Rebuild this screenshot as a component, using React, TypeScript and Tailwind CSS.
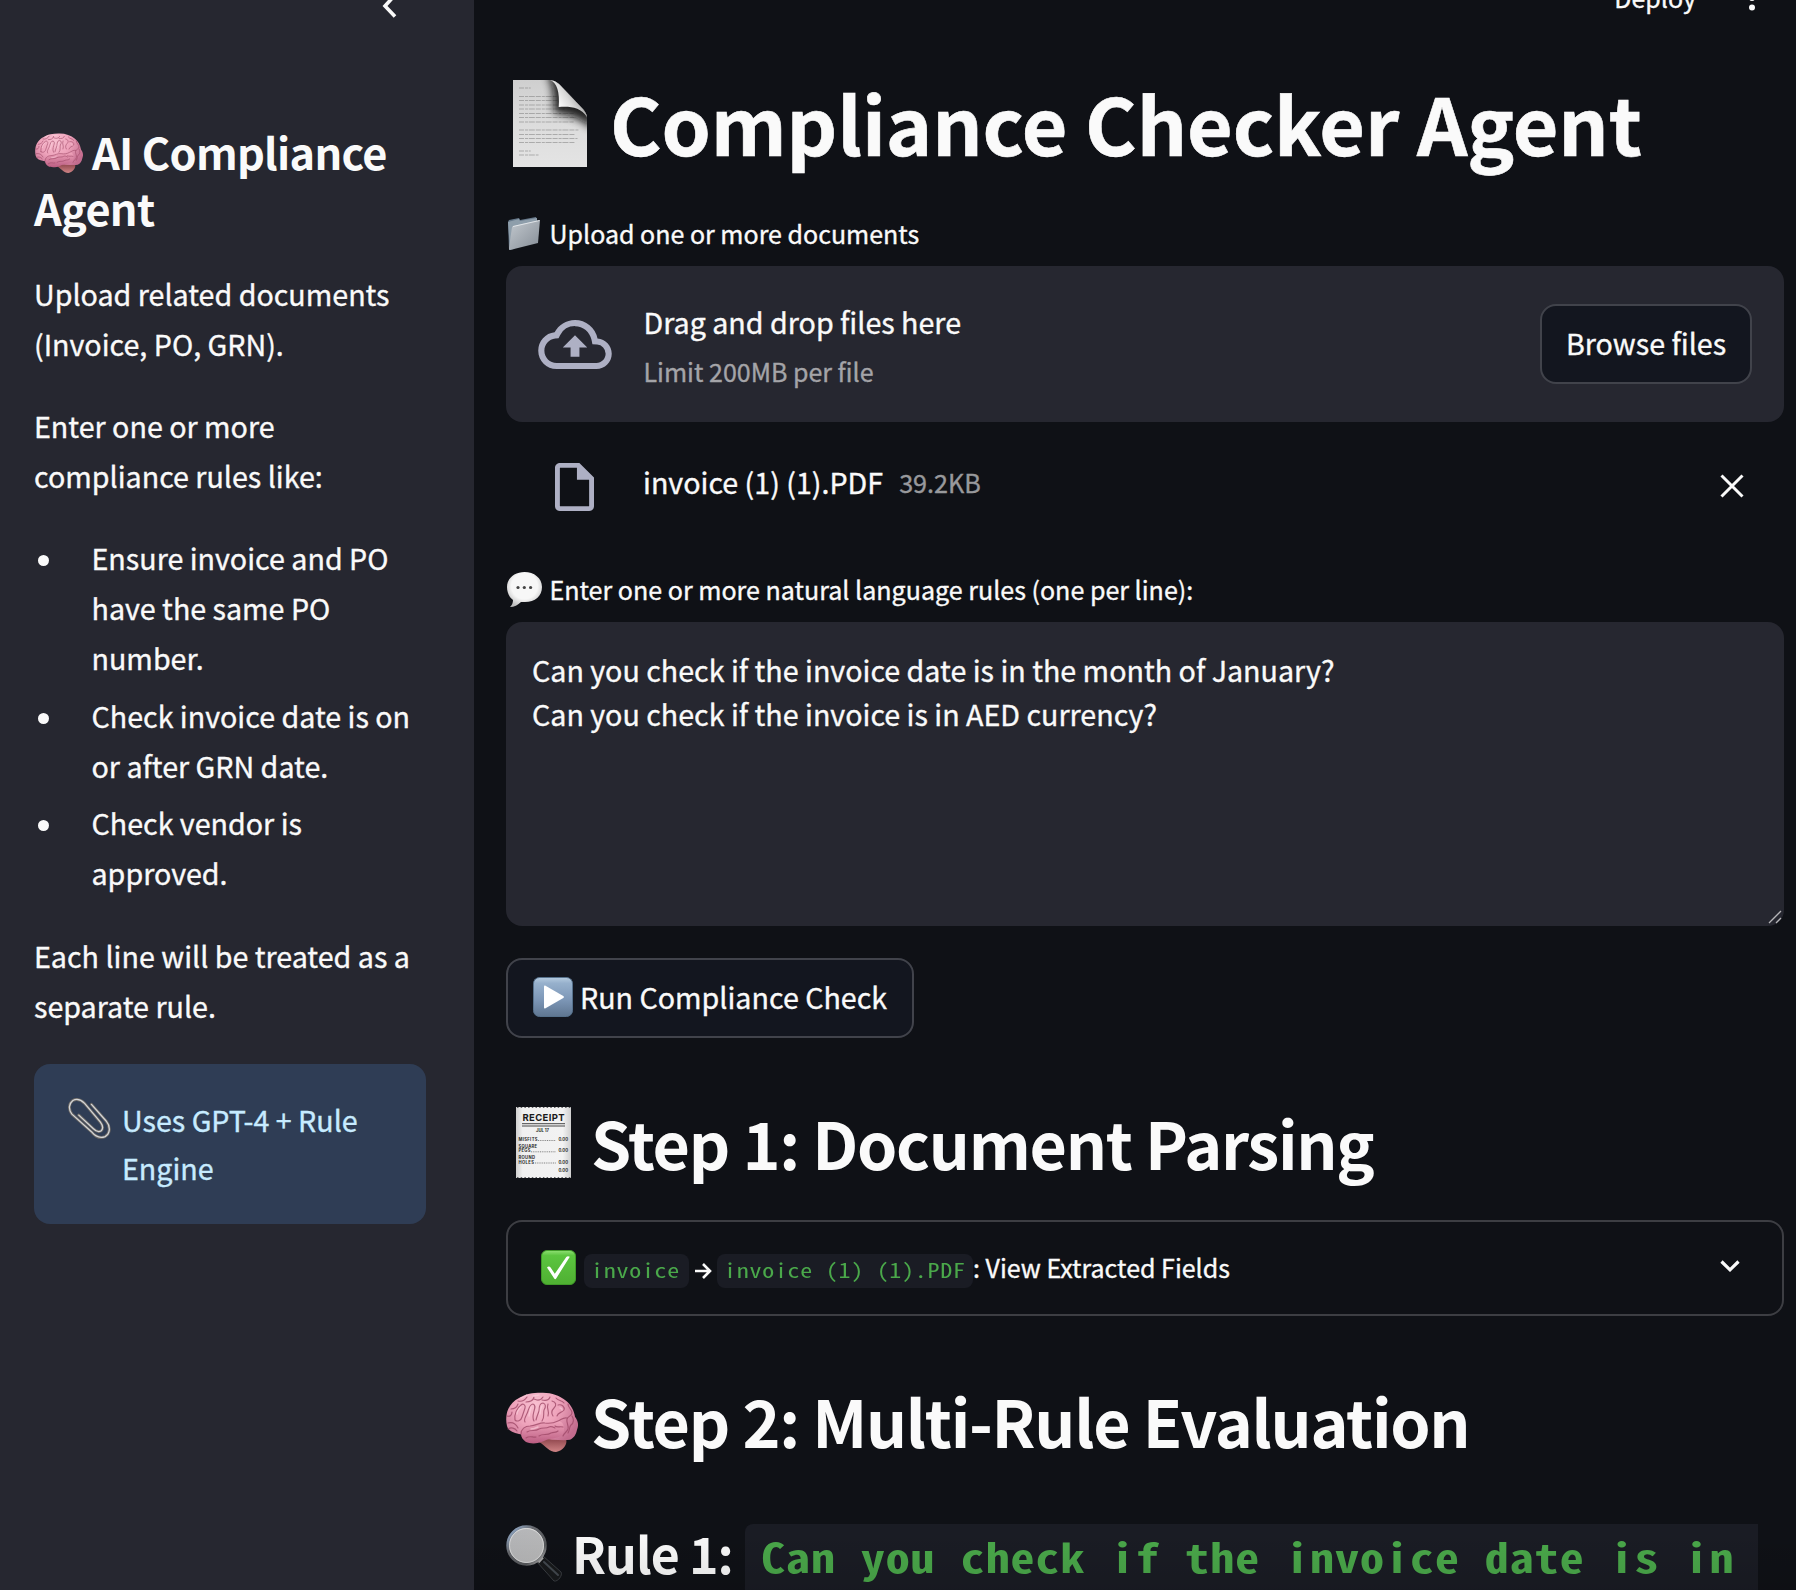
import React from "react";

type IconProps = { className?: string };

function Brain({ className }: IconProps) {
  return (
    <svg viewBox="0 0 72 60" className={className} fill="none">
      <defs>
        <radialGradient id="brainTop" cx="30" cy="12" r="46" gradientUnits="userSpaceOnUse">
          <stop offset="0" stopColor="#f8bfd0" />
          <stop offset="0.5" stopColor="#eea3bb" />
          <stop offset="1" stopColor="#c36c8e" />
        </radialGradient>
        <linearGradient id="brainLobe" x1="0" y1="0" x2="0" y2="1">
          <stop offset="0" stopColor="#f0a5bc" />
          <stop offset="1" stopColor="#bb5d82" />
        </linearGradient>
        <linearGradient id="brainStem" x1="0" y1="0" x2="0" y2="1">
          <stop offset="0" stopColor="#8a4148" />
          <stop offset="1" stopColor="#d08486" />
        </linearGradient>
      </defs>
      <path d="M33 50c8-4 20-6 27-3 2 5-3 12-10 13-7 0-10-6-17-10z" fill="url(#brainStem)" />
      <path
        d="M13 42C6 41 2 38 1 34 0 30 0 26 .7 22 2 15 7 9 13 6 20 1.500 28 .5 37 .7c9 0 17 3 23 8 5 4 8 10 9 16 3 4 4 8 2 13-1 5-3 8-7 10-6 1-12 0-18 0z"
        fill="url(#brainTop)"
      />
      <path
        d="M15 42c0-5 4-8 9-8 7-.5 10-3 15-3 6-1 9 0 13-2 6 0 8 9 4 14-5 4-12 3-18 6-6 3-14 3-18 1-3-2-5-5-5-8z"
        fill="url(#brainLobe)"
      />
      <g stroke="#a04a69" strokeWidth="1.150" strokeLinecap="round" strokeLinejoin="round" opacity=".8">
        <path d="M15 42c0-5 4-8 9-8 7-.5 10-4 15-3 6 1 9 0 13-2 3-1 5-4 9-3" />
        <path d="M2 31c4-1 8 1 10 5M2 37c3-2 7-1 9 2M1 24c3 1 5-1 5-4" />
        <path d="M9 28c-1-6 2-12 6-15 2-2 5 0 4 3l-3 9c-1 4-5 5-7 3z" />
        <path d="M19 30c-2-3 2-7 3-11 1-3 2-7 5-7 3 1 2 4 1 7-1 4-2 7 0 10" />
        <path d="M30 28c1-4 2-6 3-9 0-4 1-8 4-8 3 1 3 4 1 7-1 4 1 7-2 11" />
        <path d="M5 17c3 0 6-2 7-5M12 9c4 1 7-1 9-4M20 10c4 0 7-1 8-5M28 7c4 2 7 1 9-2M36 8c4 1 7 0 8-3" />
        <path d="M42 12c-2 5 2 7 0 12M46 9c4 1 5 4 2 7-2 2-3 5-1 8M50 6c2 3 6 2 8 5M52 13c4-1 7 2 6 5-2 3-6 2-7 6" />
        <path d="M62 12c0 4 4 5 4 9 0 3-4 3-5 6-1 4 2 6 1 10-1 3-4 4-5 7" />
        <path d="M66 24c2 3 2 7-1 9-2 2-1 5-3 8M57 35c-3-1-6 1-8-1" />
        <path d="M21 40c4-3 8 0 12-3 4-2 7 0 10-2 2-1 4 0 6 1M20 46c4-3 7 0 10-1M33 44c4-3 8 0 12-3 3-1 5 0 7-2" />
      </g>
      <g stroke="#fbd3df" strokeWidth="1.400" strokeLinecap="round" opacity=".6">
        <path d="M11 22c0-3 2-5 4-7M23 24c0-3 2-6 2-9M34 22c0-3 1-6 2-8M15 6c3-1 4-2 6-3M27 4c2 0 4-1 6-1M54 16c1 0 2 1 2 2M25 37c3 0 5-1 7-2" />
      </g>
    </svg>
  );
}

function PageCurl({ className }: IconProps) {
  const rows = [
    [8, 9], [16.500, 29], [20.500, 30], [25, 33], [29, 35], [33.500, 42], [37.500, 44], [42, 42],
    [50, 46], [54.500, 43], [58.500, 45], [62.500, 43], [71, 9], [75, 15],
  ];
  return (
    <svg viewBox="0 0 74 87" className={className} fill="none">
      <defs>
        <linearGradient id="sheet" x1="0" y1="0" x2="0" y2="1">
          <stop offset="0" stopColor="#cfcfcf" />
          <stop offset="0.5" stopColor="#dcdcdc" />
          <stop offset="1" stopColor="#e4e4e4" />
        </linearGradient>
        <linearGradient id="curl" x1="46" y1="26" x2="62" y2="16" gradientUnits="userSpaceOnUse">
          <stop offset="0" stopColor="#fafafa" />
          <stop offset="0.6" stopColor="#dadada" />
          <stop offset="1" stopColor="#b5b5b5" />
        </linearGradient>
        <filter id="soft" x="-50%" y="-50%" width="200%" height="200%">
          <feGaussianBlur stdDeviation="4" />
        </filter>
        <clipPath id="sheetClip">
          <path d="M0 0h37c5 .5 8 3 11 6l20 21c4 4 6 7 6 12v48H0z" />
        </clipPath>
      </defs>
      <g clipPath="url(#sheetClip)">
        <rect width="74" height="87" fill="url(#sheet)" />
        {rows.map(([y, w]) => (
          <path key={y} d={`M6 ${y}h${w * 1.3}`} stroke="#777" strokeWidth="1.100" strokeDasharray="5 1 3 .8 6 1" opacity=".5" />
        ))}
        <path d="M34-6c5 8 7 20 7 39 12 1 26 4 38 16L84 20 54-10z" fill="#080808" opacity=".9" filter="url(#soft)" />
      </g>
      <path d="M37 .3C44 2 47 13 45.700 27 56 26 68 27 74 37c-.5-4-3-7-6-10L48 6C45 3 42 .5 37 .3z" fill="url(#curl)" />
    </svg>
  );
}

function Folder({ className }: IconProps) {
  return (
    <svg viewBox="0 0 34 34" className={className} fill="none">
      <defs>
        <linearGradient id="folderFront" x1="0" y1="0" x2="1" y2="1">
          <stop offset="0" stopColor="#c3c9cf" />
          <stop offset="1" stopColor="#858d96" />
        </linearGradient>
      </defs>
      <path d="M1 5l1-2 10-2 1 2 16-3 1 3-23 29-5 1z" fill="#66788a" />
      <path d="M1 5l11-3 1 2 17-3v4L6 9 3 33z" fill="#8e9eab" />
      <path d="M6 9l27-6-2 23L3 33c-1 0-1-1-1-2L5 10z" fill="url(#folderFront)" />
      <path d="M6 9.500L32.500 3.500" stroke="#e0e4e8" strokeWidth="1" />
    </svg>
  );
}

function Bubble({ className }: IconProps) {
  return (
    <svg viewBox="0 0 35 35" className={className}>
      <defs>
        <radialGradient id="bubble" cx=".5" cy=".4" r=".62">
          <stop offset=".6" stopColor="#f7f7f7" />
          <stop offset="1" stopColor="#bdbdbd" />
        </radialGradient>
      </defs>
      <path d="M17.500 0C27 0 35 6 35 15s-7 15-17 15h-4c-3 3-7 5-11 5 2-2 3-4 3-7-4-3-6-8-6-13C0 6 8 0 17.500 0z" fill="url(#bubble)" />
      <g fill="#444">
        <circle cx="11" cy="15.500" r="1.600" />
        <circle cx="17.300" cy="15.500" r="1.600" />
        <circle cx="23.600" cy="15.500" r="1.600" />
      </g>
    </svg>
  );
}

function Play({ className }: IconProps) {
  return (
    <svg viewBox="0 0 40 40" className={className}>
      <defs>
        <linearGradient id="play" x1="0" y1="0" x2="0" y2="1">
          <stop offset="0" stopColor="#b5cbe0" />
          <stop offset=".15" stopColor="#96b0cc" />
          <stop offset=".55" stopColor="#7e98b8" />
          <stop offset="1" stopColor="#5f7691" />
        </linearGradient>
      </defs>
      <rect x=".5" y=".5" width="39" height="39" rx="6" fill="url(#play)" stroke="#56718c" />
      <path d="M11 9.500v21c0 .9.700 1.100 1.500.7l17.800-10.300c.8-.5.8-1.300 0-1.800L12.500 8.800c-.8-.4-1.500-.2-1.500.7z" fill="#fff" />
    </svg>
  );
}

function Receipt({ className }: IconProps) {
  const font = "Inter, 'Liberation Sans', sans-serif";
  return (
    <svg viewBox="0 0 55 71" className={className}>
      <defs>
        <linearGradient id="receipt" x1="0" y1="0" x2="1" y2="0">
          <stop offset="0" stopColor="#d0d0d0" />
          <stop offset=".12" stopColor="#f0f0f0" />
          <stop offset=".85" stopColor="#f2f2f2" />
          <stop offset="1" stopColor="#cfcfcf" />
        </linearGradient>
      </defs>
      <rect width="55" height="71" fill="url(#receipt)" />
      <path d="M1 .3h54M1 70.700h54" stroke="#101116" strokeWidth=".8" strokeDasharray="1.500 2.200" />
      <text x="27.500" y="14" textAnchor="middle" textLength="42" fontFamily={font} fontWeight="700" fontSize="9.500" fill="#1a1a1a">RECEIPT</text>
      <path d="M6 16.700h43M6 19h43" stroke="#333" strokeWidth=".9" />
      <g fontFamily={font} fontWeight="700" fontSize="4.200" fill="#2a2a2a">
        <text x="26.500" y="24.700" textAnchor="middle">JUL 17</text>
        <text x="2.500" y="34" textLength="19">MISFITS</text>
        <text x="2.500" y="41" textLength="18.500">SQUARE</text>
        <text x="2.500" y="45.300" textLength="12">PEGS</text>
        <text x="2.500" y="52.300" textLength="16.500">ROUND</text>
        <text x="2.500" y="56.500" textLength="15.500">HOLES</text>
        <text x="52" y="34" textAnchor="end">0.00</text>
        <text x="52" y="45.300" textAnchor="end">0.00</text>
        <text x="52" y="56.500" textAnchor="end">0.00</text>
        <text x="52" y="64.500" textAnchor="end">0.00</text>
      </g>
      <path d="M22 33.500h18M15 44.800h25M19 56h21" stroke="#555" strokeWidth=".7" strokeDasharray="1 .8" />
    </svg>
  );
}

function CheckBox({ className }: IconProps) {
  return (
    <svg viewBox="0 0 35 35" className={className} fill="none">
      <defs>
        <linearGradient id="check" x1="0" y1="0" x2="0" y2="1">
          <stop offset="0" stopColor="#8fdf74" />
          <stop offset=".15" stopColor="#5cc540" />
          <stop offset="1" stopColor="#4fb032" />
        </linearGradient>
      </defs>
      <rect x=".5" y=".5" width="34" height="34" rx="5.500" fill="url(#check)" stroke="#3f9a28" />
      <path d="M6 17.500c1-1.200 2.800-1.200 3.600 0l4.200 6.300L25.300 7c.7-1 2.500-1 3.500-.2L15.200 28.400c-.6 1-1.400 1-2 0z" fill="#fff" />
    </svg>
  );
}

function Magnifier({ className }: IconProps) {
  return (
    <svg viewBox="0 0 57 57" className={className} fill="none">
      <defs>
        <linearGradient id="lens" x1="0" y1="0" x2="1" y2="1">
          <stop offset="0" stopColor="#b4b5b8" />
          <stop offset="1" stopColor="#b9b9b9" />
        </linearGradient>
        <linearGradient id="ring" x1="0" y1="0" x2="1" y2="1">
          <stop offset="0" stopColor="#9dbbe0" />
          <stop offset=".35" stopColor="#66686d" />
          <stop offset=".75" stopColor="#55575a" />
          <stop offset="1" stopColor="#d9d9d9" />
        </linearGradient>
      </defs>
      <path d="M31 37l6-6 18 16c2 3-3 10-7 9z" fill="#17191b" stroke="#44484d" strokeWidth=".8" />
      <path d="M38 37l14 13" stroke="#43494f" strokeWidth="2" strokeLinecap="round" />
      <path d="M32.500 37.500l4.500-5" stroke="#a8a8a8" strokeWidth="2" />
      <circle cx="20.500" cy="20.500" r="18.800" fill="url(#lens)" stroke="url(#ring)" strokeWidth="2.800" />
      <circle cx="20.500" cy="20.500" r="17" stroke="#e2e2e2" strokeWidth=".8" />
    </svg>
  );
}

function Paperclip({ className }: IconProps) {
  const d =
    "M24 6L39 23c5 6 4 13-1 16-5 2-10 0-14-5L4 16C0 11 1 5 5 2c4-2 8-1 12 3l16 19c3 4 3 7 1 9-3 2-6 0-8-2L11 17";
  return (
    <svg viewBox="0 0 44 43" className={className} fill="none" strokeLinecap="round" strokeLinejoin="round">
      <path d={d} stroke="#6c6864" strokeWidth="3" />
      <path d={d} stroke="#d3d5d8" strokeWidth="1.300" />
    </svg>
  );
}

// Monospaced chip; the glyphs are widened to give the 0.6em advance of Source Code Pro.
function Code({ children, box, text }: { children: React.ReactNode; box: string; text: string }) {
  return (
    <code
      className={
        "block shrink-0 overflow-hidden bg-[#1a1c24] font-['Noto_Sans_Mono_CJK_SC','Liberation_Mono',monospace] text-[#4aa84a] " +
        box
      }
    >
      <span className={"block w-max origin-left scale-x-[1.2] whitespace-pre " + text}>{children}</span>
    </code>
  );
}

const examples = [
  ["Ensure invoice and PO", "have the same PO", "number."],
  ["Check invoice date is on", "or after GRN date."],
  ["Check vendor is", "approved."],
];

function Lines({ lines }: { lines: string[] }) {
  return (
    <>
      {lines.map((line) => (
        <span key={line} className="block whitespace-nowrap">
          {line}
        </span>
      ))}
    </>
  );
}

function Sidebar() {
  return (
    <aside className="flex w-[474px] shrink-0 flex-col bg-[#262730] pr-12 pl-[34px] text-[28.650px] leading-[50.100px]">
      <div className="flex h-[123px] justify-end pr-[28px]">
        <svg viewBox="0 0 17 24" className="mt-[-6px] h-6 w-[17px]" fill="none" stroke="#fafafa" strokeWidth="3.6">
          <path d="M14 1L4 12l10 10.500" />
        </svg>
      </div>
      <h2 className="text-[43.300px] leading-[56px] font-semibold tracking-[-0.7px] [-webkit-text-stroke:0px]">
        <span className="flex whitespace-nowrap">
          <Brain className="mt-[10px] mr-[9px] ml-px h-[40px] w-[48px] shrink-0" />
          AI Compliance
        </span>
        Agent
      </h2>
      <p className="mt-[34px]">
        <Lines lines={["Upload related documents", "(Invoice, PO, GRN)."]} />
      </p>
      <p className="mt-[32px]">
        <Lines lines={["Enter one or more", "compliance rules like:"]} />
      </p>
      <ul className="mt-[31.900px] flex flex-col gap-[7px]">
        {examples.map((lines) => (
          <li key={lines[0]} className="flex">
            <span className="mt-[22px] mr-[42.500px] ml-[4px] size-[11px] shrink-0 rounded-full bg-[#fafafa]" />
            <span>
              <Lines lines={lines} />
            </span>
          </li>
        ))}
      </ul>
      <p className="mt-[33px]">
        <Lines lines={["Each line will be treated as a", "separate rule."]} />
      </p>
      <div className="mt-[33px] flex h-[160px] w-[392px] rounded-2xl bg-[#2f3d55] pt-[31.500px] pl-[34px] leading-[48.500px] text-[#c7ebff]">
        <Paperclip className="mt-[2px] mr-[11px] h-[43px] w-[43px] shrink-0" />
        <p>
          <Lines lines={["Uses GPT-4 + Rule", "Engine"]} />
        </p>
      </div>
    </aside>
  );
}

export default function App() {
  return (
    <div className="flex h-[1590px] w-[1796px] overflow-hidden bg-[#0f1116] font-['Noto_Sans_CJK_SC',sans-serif] text-[#fafafa] [-webkit-text-stroke:0.35px]">
      <Sidebar />
      <main className="relative flex flex-1 flex-col overflow-hidden pr-[12px] pl-[32px]">
        <header className="flex h-[17px] shrink-0 items-end justify-end pr-[28px]">
          <span className="text-[25px] leading-[40px]">Deploy</span>
          <svg viewBox="0 0 8 32" className="mb-[6px] ml-[52px] h-8 w-2" fill="#fafafa">
            <circle cx="4" cy="10" r="3" />
            <circle cx="4" cy="19" r="3" />
            <circle cx="4" cy="28.500" r="3" />
          </svg>
        </header>

        <h1 className="mt-[52px] flex h-[106px] shrink-0 pl-[7px] text-[78.8px] leading-[106px] font-bold tracking-[-0.12px] whitespace-nowrap [-webkit-text-stroke:0.6px]">
          <PageCurl className="mt-[11px] mr-[23px] h-[87px] w-[74px]" />
          Compliance Checker Agent
        </h1>

        <div className="mt-[36px] flex h-[45px] shrink-0 text-[25px] leading-[45px]">
          <Folder className="mt-[6px] mr-[8.500px] ml-px h-[34px] w-[34px]" />
          Upload one or more documents
        </div>
        <section className="mt-[10px] flex h-[156px] shrink-0 rounded-2xl bg-[#262730] pr-8 pl-8">
          <svg viewBox="0 0 24 16" className="mt-[54px] mr-[31.500px] h-[49px] w-[74px]" fill="#aeb0c4">
            <path d="M19.350 6.040A7.490 7.490 0 0 0 12 0C9.110 0 6.600 1.640 5.350 4.040A5.994 5.994 0 0 0 0 10c0 3.310 2.690 6 6 6h13c2.760 0 5-2.240 5-5 0-2.640-2.050-4.780-4.650-4.960zM19 14H6c-2.210 0-4-1.790-4-4 0-2.050 1.530-3.760 3.560-3.970l1.070-.11.5-.95A5.469 5.469 0 0 1 12 2c2.620 0 4.880 1.860 5.390 4.430l.3 1.500 1.530.11A2.980 2.980 0 0 1 22 11c0 1.650-1.350 3-3 3zM8 9h2.550v3h2.900V9H16l-4-4z" />
          </svg>
          <div className="pt-[30px] whitespace-nowrap">
            <p className="text-[28.650px] leading-[51px]">Drag and drop files here</p>
            <p className="mt-[2px] text-[25px] leading-[45px] text-[#a4a4a8]">Limit 200MB per file</p>
          </div>
          <button className="mt-[38px] ml-auto flex h-[80px] w-[212px] items-center justify-center rounded-2xl border-2 border-[#41434b] bg-[#13161f] pb-[2px] text-[28.650px]">
            Browse files
          </button>
        </section>

        <div className="mt-[34px] flex h-[51px] shrink-0 items-start pr-[40px] pl-[48px] text-[28.650px] leading-[51px]">
          <svg viewBox="0 0 16 20" className="mt-[7px] mr-[49px] ml-[1px] h-[48px] w-[39px]" preserveAspectRatio="none" fill="#aeb0c4">
            <path fillRule="evenodd" d="M10 0H2C.9 0 0 .9 0 2v16c0 1.100.9 2 2 2h12c1.100 0 2-.9 2-2V6zM2 18V2h7v5h5v11z" />
          </svg>
          invoice (1) (1).PDF
          <span className="mt-px ml-[16px] text-[25.200px] text-[#98999c]">39.2KB</span>
          <svg viewBox="0 0 24 24" className="mt-[18px] ml-auto size-6" fill="none" stroke="#fafafa" strokeWidth="3">
            <path d="M1.500 1.500l21 21M22.500 1.500l-21 21" />
          </svg>
        </div>

        <div className="mt-[60px] flex h-[45px] shrink-0 text-[25.050px] leading-[45px]">
          <Bubble className="mt-[5px] mr-[7.500px] ml-[1px] size-[35px]" />
          Enter one or more natural language rules (one per line):
        </div>
        <section className="relative mt-[10px] h-[304px] shrink-0 rounded-2xl bg-[#262730] pt-[26px] pl-[26px] text-[28.650px] leading-[44.300px]">
          <Lines
            lines={[
              "Can you check if the invoice date is in the month of January?",
              "Can you check if the invoice is in AED currency?",
            ]}
          />
          <svg viewBox="0 0 14 14" className="absolute right-[2px] bottom-[2px] size-[14px]" stroke="#b5b5b8" strokeWidth="1.3">
            <path d="M1 13L13 1M8 13l5-5" />
          </svg>
        </section>

        <button className="mt-[32px] flex h-[80px] w-[408px] shrink-0 items-center rounded-2xl border-2 border-[#41434b] bg-[#13161f] pl-[25px] text-[28.650px]">
          <Play className="mr-[7px] mb-[2px] size-[40px]" />
          <span className="pb-px whitespace-nowrap">Run Compliance Check</span>
        </button>

        <h2 className="mt-[61px] flex h-[86px] shrink-0 text-[64.500px] leading-[86px] font-semibold tracking-[-1.280px] whitespace-nowrap [-webkit-text-stroke:0px]">
          <Receipt className="mt-[8px] mr-[20px] ml-[10px] h-[71px] w-[55px] tracking-normal" />
          Step 1: Document Parsing
        </h2>
        <section className="mt-[35px] flex h-[96px] shrink-0 items-center rounded-2xl border-2 border-[#3d3e43] pr-[42px] pl-[33px] text-[25px] whitespace-nowrap">
          <CheckBox className="mr-[8px] mb-[2px] size-[35px]" />
          <Code box="mt-[6px] h-[34px] w-[105px] rounded-lg pl-[7px]" text="text-[20px] leading-[32px] tracking-[0.600px] [-webkit-text-stroke:0px]">
            invoice
          </Code>
          <svg viewBox="0 0 17 16" className="mr-[5px] ml-[6px] mt-[5px] h-4 w-[17px]" fill="none" stroke="#fafafa" strokeWidth="2.6">
            <path d="M0 8h15M8 1l7 7-7 7" />
          </svg>
          <Code box="mt-[6px] h-[34px] w-[256px] rounded-lg pl-[7px]" text="text-[20px] leading-[32px] tracking-[0.600px] [-webkit-text-stroke:0px]">
            invoice (1) (1).PDF
          </Code>
          <span>: View Extracted Fields</span>
          <svg viewBox="0 0 20 12" className="mb-[4px] ml-auto h-3 w-5" fill="none" stroke="#fafafa" strokeWidth="3.2">
            <path d="M1.500 1.500l8.500 8.300 8.500-8.300" />
          </svg>
        </section>

        <h2 className="mt-[61px] flex h-[86px] shrink-0 text-[64.500px] leading-[86px] font-semibold tracking-[-1.280px] whitespace-nowrap [-webkit-text-stroke:0px]">
          <Brain className="mt-[15px] mr-[13px] h-[60px] w-[72px]" />
          Step 2: Multi-Rule Evaluation
        </h2>
        <h3 className="mt-[56px] flex h-[80px] shrink-0 text-[50px] leading-[66px] font-semibold whitespace-nowrap [-webkit-text-stroke:0px]">
          <Magnifier className="mt-[6px] mr-[9px] size-[57px]" />
          <span className="w-[173px] tracking-[-1px]">Rule 1:</span>
          <Code box="mt-[5px] h-[80px] w-[1013px] rounded-tl-lg pl-[16px]" text="text-[40px] leading-[65px] tracking-[0.800px]">
            Can you check if the invoice date is in
          </Code>
        </h3>
        <div className="pointer-events-none absolute inset-x-0 bottom-0 h-[60px] bg-gradient-to-b from-transparent to-black/10" />
      </main>
    </div>
  );
}
